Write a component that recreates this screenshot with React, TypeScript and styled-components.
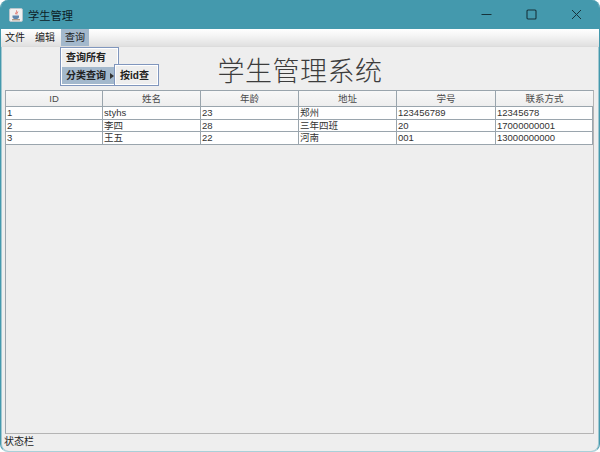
import styled, { createGlobalStyle } from 'styled-components';

const GlobalStyle = createGlobalStyle`
    html, body {
        margin: 0;
        padding: 0;
        background: #ffffff;
    }
`

const Window = styled.div`
    width: 600px;
    height: 452px;
    box-sizing: border-box;
    display: flex;
    flex-direction: column;
    background: #eeeeee;
    border: 1px solid #4499ad;
    border-top: 0;
    border-bottom-color: #a9d0d9;
    border-radius: 8px;
    box-shadow: inset 1px 0 0 rgba(68, 153, 173, 0.45), inset -1px 0 0 rgba(68, 153, 173, 0.45);
    overflow: hidden;
    position: relative;
    font-family: "Liberation Sans", "Noto Sans CJK SC", sans-serif;
    font-size: 10px;
    color: #333333;
`

const TitleBar = styled.div`
    height: 29px;
    flex: none;
    display: flex;
    align-items: center;
    padding-left: 8px;
    background: #4499ad;
`

const AppIcon = styled.svg`
    width: 14px;
    height: 14px;
    margin-right: 5px;
`

const TitleText = styled.span`
    font-size: 11.25px;
    color: #0c2127;
`

const WindowButtons = styled.div`
    margin-left: auto;
    display: flex;
`

const WindowButton = styled.div`
    width: 45px;
    height: 29px;
    display: flex;
    align-items: center;
    justify-content: center;
    color: #16333b;
`

const MenuBar = styled.div`
    height: 18px;
    flex: none;
    display: flex;
    gap: 2px;
    background: linear-gradient(#ffffff, #f6f6f6 35%, #e0e0e0);
    border-bottom: 1px solid #dcdcdc;
    box-sizing: border-box;
`

const MenuItem = styled.div<{ $active?: boolean }>`
    height: 17px;
    line-height: 17px;
    padding: 0 4px;
    background: ${({ $active }) => ($active ? '#a3b8cc' : 'transparent')};
    color: #1c1c1c;
`

const Content = styled.div`
    flex: 1;
    display: flex;
    flex-direction: column;
    min-height: 0;
`

const Heading = styled.div`
    height: 42px;
    padding-top: 1px;
    flex: none;
    display: flex;
    align-items: center;
    justify-content: center;
    font-size: 27px;
    font-weight: 300;
    letter-spacing: 0.5px;
    color: #3c3c3c;
    font-family: "Noto Sans CJK SC", serif;
`

const TableArea = styled.div`
    flex: 1;
    margin: 0 5px 0 4px;
    border: 1px solid #9aa5ad;
    border-bottom-color: #b4b4b4;
    border-right-color: #b4b4b4;
    min-height: 0;
    font-size: 9.5px;
`

const Grid = styled.div`
    display: grid;
    grid-template-columns: 97px 98px 98px 98px 99px 97px;
    grid-auto-rows: 12.5px;
    grid-template-rows: 16px;
`

const HeaderCell = styled.div`
    line-height: 16px;
    text-align: center;
    box-sizing: border-box;
    border-right: 1px solid #9aa5ad;
    border-bottom: 1px solid #9aa5ad;
    background: linear-gradient(#f8f8f8, #eeeeee);
    color: #4a4a4a;
    &:nth-of-type(6) {
        border-right: 0;
    }
`

const Cell = styled.div`
    line-height: 12px;
    box-sizing: border-box;
    padding-left: 1px;
    background: #ffffff;
    border-right: 1px solid #9aa5ad;
    border-bottom: 1px solid #9aa5ad;
    white-space: nowrap;
    overflow: hidden;
    color: #333333;
`

const StatusBar = styled.div`
    height: 17px;
    flex: none;
    line-height: 15px;
    padding-left: 3px;
    color: #1c1c1c;
`

const Popup = styled.div`
    position: absolute;
    box-sizing: border-box;
    background: #eeeeee;
    border: 1px solid #8096bd;
    box-shadow: inset 0 0 0 1px #ffffff;
    font-weight: 700;
`

const QueryMenu = styled(Popup)`
    left: 59px;
    top: 47px;
    width: 59px;
    height: 39px;
    padding: 1px 1px 0;
    display: flex;
    flex-direction: column;
    gap: 1px;
`

const SubMenu = styled(Popup)`
    left: 113px;
    top: 64px;
    width: 45px;
    height: 22px;
    padding: 2px 1px;
`

const PopupItem = styled.div<{ $active?: boolean }>`
    height: 17px;
    line-height: 17px;
    padding-left: 4px;
    display: flex;
    align-items: center;
    background: ${({ $active }) => ($active ? '#a3b8cc' : 'transparent')};
    color: #222222;
`

const Arrow = styled.span`
    width: 0;
    height: 0;
    margin-left: 4px;
    border-left: 4px solid #333333;
    border-top: 3px solid transparent;
    border-bottom: 3px solid transparent;
`

const columns = ['ID', '姓名', '年龄', '地址', '学号', '联系方式'];

const rows = [
    ['1', 'styhs', '23', '郑州', '123456789', '12345678'],
    ['2', '李四', '28', '三年四班', '20', '17000000001'],
    ['3', '王五', '22', '河南', '001', '13000000000'],
];

const App = () => {
    return (
        <Window>
            <GlobalStyle />
            <TitleBar>
                <AppIcon viewBox="0 0 14 14">
                    <rect x="0.5" y="0.5" width="13" height="13" rx="1.5" fill="#f1f1f1" stroke="#b9c6cc" />
                    <path d="M7.5 2.5c1 1.5-1.5 2.2-.6 3.8M9 3.8c-.5 1-1.6 1.2-1 2.6" stroke="#d9534a" strokeWidth="0.9" fill="none" />
                    <path d="M3.5 7.5h6.5v1.6c0 1.1-1 1.9-2 1.9H5.5c-1 0-2-.8-2-1.9z" fill="#5f86ad" />
                    <path d="M3 11.8h8" stroke="#8a6a4a" strokeWidth="0.9" />
                </AppIcon>
                <TitleText>学生管理</TitleText>
                <WindowButtons>
                    <WindowButton>
                        <svg width="11" height="11" viewBox="0 0 11 11">
                            <path d="M0.5 5.5h10" stroke="currentColor" strokeWidth="1" />
                        </svg>
                    </WindowButton>
                    <WindowButton>
                        <svg width="11" height="11" viewBox="0 0 11 11">
                            <rect x="1" y="1" width="9" height="9" rx="1" fill="none" stroke="currentColor" strokeWidth="1.1" />
                        </svg>
                    </WindowButton>
                    <WindowButton>
                        <svg width="11" height="11" viewBox="0 0 11 11">
                            <path d="M1 1l9 9M10 1l-9 9" stroke="currentColor" strokeWidth="1" />
                        </svg>
                    </WindowButton>
                </WindowButtons>
            </TitleBar>
            <MenuBar>
                <MenuItem>文件</MenuItem>
                <MenuItem>编辑</MenuItem>
                <MenuItem $active>查询</MenuItem>
            </MenuBar>
            <Content>
                <Heading>学生管理系统</Heading>
                <TableArea>
                    <Grid>
                        {columns.map((column) => (
                            <HeaderCell key={column}>{column}</HeaderCell>
                        ))}
                        {rows.map((row) =>
                            row.map((value, index) => <Cell key={`${row[0]}-${index}`}>{value}</Cell>)
                        )}
                    </Grid>
                </TableArea>
                <StatusBar>状态栏</StatusBar>
            </Content>
            <QueryMenu>
                <PopupItem>查询所有</PopupItem>
                <PopupItem $active>
                    分类查询
                    <Arrow />
                </PopupItem>
            </QueryMenu>
            <SubMenu>
                <PopupItem>按id查</PopupItem>
            </SubMenu>
        </Window>
    );
};

export default App;
